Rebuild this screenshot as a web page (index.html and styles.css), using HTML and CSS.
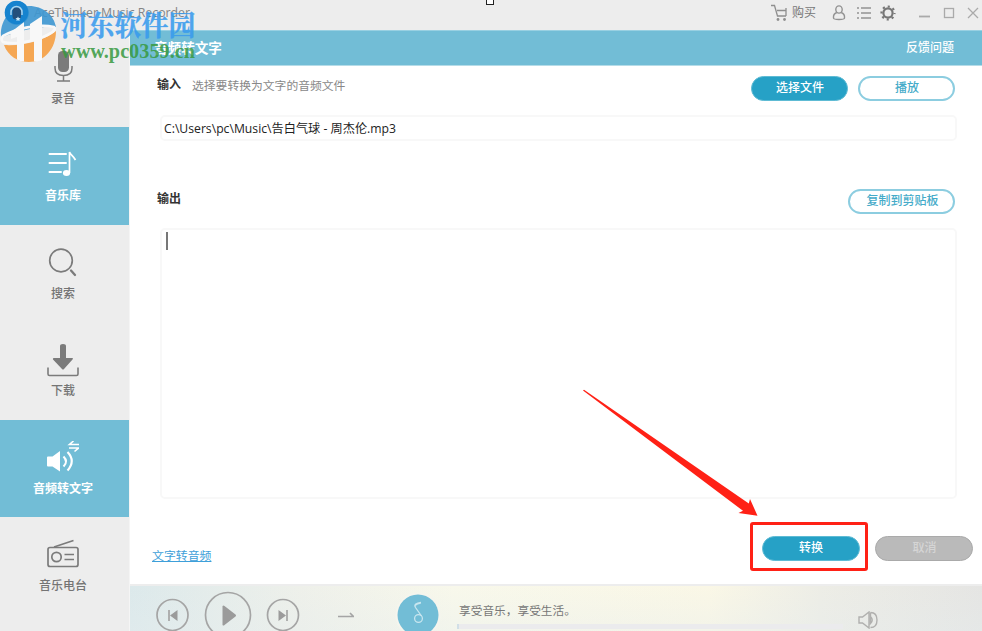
FILE: index.html
```html
<!DOCTYPE html>
<html lang="zh-CN">
<head>
<meta charset="utf-8">
<title>AceThinker Music Recorder</title>
<link rel="stylesheet" href="styles.css">
</head>
<body>
<div class="window">
  <header class="titlebar">
    <svg class="app-logo" width="24" height="24" viewBox="0 0 24 24"><circle cx="12" cy="12" r="12" fill="#1683cf"/></svg>
    <span class="app-name">AceThinker Music Recorder</span>
    <div class="tools">
      <svg class="cart" width="18" height="18" viewBox="0 0 18 18" fill="none" stroke="#8f8f8f" stroke-width="1.300"><path d="M1 1.500h3.500l3 10.500H16M7 6.500h8.500M16 4v8"/><g fill="#8f8f8f" stroke="none"><circle cx="8" cy="15.500" r="1.400"/><circle cx="14.500" cy="15.500" r="1.400"/></g></svg>
      <span class="buy">购买</span>
      <svg class="user" width="14" height="18" viewBox="0 0 14 18" fill="none" stroke="#929292" stroke-width="1.400"><ellipse cx="7" cy="5.500" rx="3.200" ry="3.600"/><path d="M4.800 8.500C2 9.500 1.300 12 1.500 14c.2 2 10.800 2 11 0 .2-2-.5-4.500-3.300-5.500"/></svg>
      <svg class="list" width="14" height="14" viewBox="0 0 14 14" stroke="#929292" stroke-width="1.400"><path d="M0 2h2M4 2h10M0 7h2M4 7h10M0 12h2M4 12h10"/></svg>
      <svg class="gear" width="16" height="16" viewBox="0 0 16 16" fill="none" stroke="#777"><circle cx="8" cy="8" r="4.600" stroke-width="2.200"/><circle cx="8" cy="8" r="6.500" stroke-width="2.200" stroke-dasharray="2.100 3.005" stroke-dashoffset="1.050"/></svg>
      <svg class="winbtns" width="62" height="14" viewBox="0 0 62 14" fill="none" stroke="#aaa" stroke-width="1.300"><path d="M1 10.500h11" stroke-width="1.800"/><rect x="26.500" y="2.500" width="9" height="9"/><path d="M50 2l10 10M60 2L50 12"/></svg>
    </div>
  </header>
  <div class="body">
    <nav class="sidebar">
      <a class="item first">
        <svg width="32" height="32" viewBox="0 0 32 32"><rect x="11" y="0" width="11" height="21" rx="4.500" fill="#7b7b7b"/><path d="M8 15v2c0 5 3 7.500 8.500 7.500S25 22 25 17v-2M16.500 24v5.500M10 30h13" fill="none" stroke="#7b7b7b" stroke-width="1.500"/></svg>
        <span>录音</span></a>
      <a class="item active">
        <svg width="32" height="32" viewBox="0 0 32 32" fill="none" stroke="#fff"><path d="M2.500 6H19M2.500 15H19M2.500 24H14" stroke-width="2" stroke-linecap="round"/><path d="M22.500 25V4c1 3 4 4 6 8" stroke-width="1.700"/><ellipse cx="19.500" cy="25" rx="3.600" ry="3" fill="#fff" stroke="none"/></svg>
        <span>音乐库</span></a>
      <a class="item">
        <svg width="32" height="32" viewBox="0 0 32 32" fill="none" stroke="#7b7b7b"><circle cx="14" cy="14.500" r="11.300" stroke-width="1.700"/><path d="M24 24.500l4 4.500" stroke-width="2.300" stroke-linecap="round"/></svg>
        <span>搜索</span></a>
      <a class="item">
        <svg class="tall" width="32" height="34" viewBox="0 0 32 34"><path d="M13 3q0-2 3-2t3 2v12h6.500q1 .5 0 1.500L17 26q-1 1-2 0L6 16.500q-.5-1 .5-1.500H13z" fill="#7b7b7b"/><path d="M1 24.500v6.500q0 1.500 1.500 1.500h27q1.500 0 1.500-1.500v-6.500" fill="none" stroke="#7b7b7b" stroke-width="1.600"/></svg>
        <span>下载</span></a>
      <a class="item active">
        <svg class="tall" width="32" height="34" viewBox="0 0 32 34"><path d="M0 16.500q0-1 1-1h4.500l7.500-5.500v20.500L5.500 25.500H1q-1 0-1-1z" fill="#fff"/><path d="M16.500 15.500q5 5 0 10M20.500 11q8.500 9 0 18.500" fill="none" stroke="#fff" stroke-width="2.100"/><path d="M32 3.500H22.500l4-3.500M22 7h9.500l-4 3.500" fill="none" stroke="#fff" stroke-width="1.600"/></svg>
        <span>音频转文字</span></a>
      <a class="item radio">
        <svg width="32" height="32" viewBox="0 0 32 32" fill="none" stroke="#7b7b7b" stroke-width="1.700"><rect x="1" y="9.500" width="30" height="19" rx="2"/><circle cx="9.500" cy="19" r="4.700"/><path d="M17.500 16.500H27M17.500 21.500H27M7 9L26.500 2.500"/></svg>
        <span>音乐电台</span></a>
    </nav>
    <main class="content">
      <div class="page-head"><h1>音频转文字</h1><a>反馈问题</a></div>
      <section class="panel">
        <div class="row input-row">
          <b>输入</b><span class="hint">选择要转换为文字的音频文件</span>
          <button class="pill solid">选择文件</button><button class="pill outline">播放</button>
        </div>
        <div class="path">C:\Users\pc\Music\告白气球 - 周杰伦.mp3</div>
        <div class="row output-row"><b>输出</b><button class="pill outline copy">复制到剪贴板</button></div>
        <div class="output"><i class="caret"></i></div>
        <div class="row actions">
          <a class="link">文字转音频</a>
          <div class="mark"><button class="pill solid">转换</button></div>
          <button class="pill disabled">取消</button>
        </div>
      </section>
      <footer class="player">
        <svg class="controls" width="202" height="46" viewBox="0 0 202 46" fill="none" stroke="#a5a5a5" stroke-width="1.700"><circle cx="16.500" cy="29" r="15.500"/><circle cx="72" cy="29" r="22.500"/><circle cx="127" cy="29" r="15.500"/><path d="M13 24v11M131 24v11"/><g fill="#9b9b9b" stroke="none"><path d="M21.500 24v11L14 29.500zM66.500 20q1-1 2 0l11 8.500q1 1 0 2l-11 8.500q-1 1-2 0zM122.500 24v11l7.500-5.500z"/></g><path d="M182 30.500h16M194 27l3.500 3.500"/></svg>
        <svg class="disc" width="46" height="46" viewBox="0 0 46 46"><circle cx="23" cy="29" r="22.500" fill="#f5f5ee"/><circle cx="23" cy="29" r="20.500" fill="#72bdd6"/><g fill="none" stroke="#c8e6ef" stroke-width="1.300"><circle cx="23.500" cy="32.500" r="3.900"/><path d="M26.500 30L20.500 21.500c-2-3 1-4.500 5.500-5M20 19.500q2-2 6-2.500"/></g></svg>
        <div class="track"><span>享受音乐，享受生活。</span><div class="progress"></div></div>
        <svg class="volume" width="20" height="18" viewBox="0 0 20 18" fill="none" stroke="#b0b0ae" stroke-width="1.400"><path d="M1 6h3.500L11 1v16l-6.500-5H1zM12.500 1.500q6.500 0 6.500 7.500t-6.500 7.500M12.500 5.500q3.500 3.500 0 7V1.500"/></svg>
      </footer>
    </main>
  </div>
</div>
<div class="handle"></div>
<svg class="arrow" width="180" height="130" viewBox="580 388 180 130"><path d="M583 390.500L584 389.800 748.800 503.500 750 499 757.500 515.700 738.500 513 743 510.800z" fill="#ff2116"/></svg>
<svg class="watermark" width="200" height="66" viewBox="0 0 200 66">
  <g opacity=".9"><path d="M1 36C0 18 13 6 29 6c14 0 25 9 27 21C39 26 20 30 1 38z" fill="#3d97d2"/><path d="M4 45C24 46 43 41 56 31c0 18-12 31-27 31-11 0-21-6-25-17z" fill="#f6a044"/><path d="M11 32L24 22v39.500q-4 0-7-2V37l-6 2zM30 24l12-8v44q-4 1.500-8 1.500V40l-4 1z" fill="#fafafa"/><path d="M3 36C16 29 38 23 54 27c4 3-6 9-20 13-12 3-24 4-31 2-2-2-2-4 0-6z" fill="none" stroke="#fafafa" stroke-width="2.600"/></g>
  <text class="wm-name" x="60.500" y="35.500" textLength="135" lengthAdjust="spacingAndGlyphs">河东软件园</text>
  <text class="wm-url" x="61" y="58" textLength="134" lengthAdjust="spacingAndGlyphs">www.pc0359.cn</text>
  <g><circle cx="16.500" cy="12.500" r="11.800" fill="#1683cf"/><rect x="12.500" y="7.500" width="8.500" height="12" rx="3.500" fill="#24507c"/><path d="M11 15v-3a5.500 5.500 0 0 1 11 0v3" fill="none" stroke="#a8d4ef" stroke-width="1.500"/><path d="M18 16.500l.8 1.500 1.700.2-1.200 1.200.3 1.700-1.600-.8-1.600.8.3-1.700-1.200-1.200 1.700-.2z" fill="#cce8f7"/></g>
</svg>
</body>
</html>
```
FILE: styles.css
```css
* { box-sizing: border-box; }
body { margin: 0; overflow: hidden; font: 12px/18px "Open Sans", "Noto Sans CJK SC", sans-serif; color: #333; }
svg { display: block; flex: none; }
button { font: inherit; padding: 0; }
.window { width: 982px; height: 631px; display: flex; flex-direction: column; background: #fff; }
.titlebar { height: 30px; flex: none; background: #ededed; display: flex; align-items: center; padding: 0 2px 4px 5px; }
.app-name { margin-left: 5px; font-size: 12.3px; color: #858585; }
.tools { margin-left: auto; display: flex; align-items: center; color: #777; }
.buy { margin: 0 16px 0 4px; }
.user { margin-right: 1px; }
.list { margin: 0 9px 0 10px; }
.winbtns { margin-left: 22px; }
.body { flex: 1; min-height: 0; display: flex; }
.sidebar { width: 130px; flex: none; background: #ededed; border-right: 1px solid #f5f5f5; overflow: hidden; }
.item { height: 97.500px; display: flex; flex-direction: column; align-items: center; padding: 21px 3px 0 0; color: #747474; font-weight: 500; }
.item.first { height: 97px; }
.item span { margin-top: 7px; }
.item svg { height: 32px; }
.item .tall { height: 34px; }
.item .tall + span { margin-top: 5px; }
.active { background: #72bdd6; color: #fff; font-weight: 700; }
.content { flex: 1; min-width: 0; display: flex; flex-direction: column; }
.page-head { height: 36px; background: #72bdd6; border-top: 1px solid #98d0e2; border-bottom: 1px solid #b5dce8; color: #fff; display: flex; align-items: center; justify-content: space-between; padding: 0 29px 0 24px; font-weight: 700; }
.page-head h1 { margin: 0; font-size: 13.600px; font-weight: 700; }
.page-head a { font-weight: 500; margin-right: -1px; }
.panel { height: 518px; padding: 10px 25px 0 22px; }
.row { display: flex; align-items: center; }
.row b { margin-left: 5px; color: #333; }
.input-row { height: 24px; margin-bottom: 15px; }
.hint { margin: -7px auto 0 11px; color: #888; font-size: 11.800px; }
.input-row b { margin-top: -6px; }
.pill { width: 97px; height: 25px; border-radius: 13px; border: 2px solid #8ccde0; background: #fff; color: #45abc9; line-height: 20px; padding: 0 0 1px 1px; font-weight: 500; }
.pill.solid { background: #26a1c6; color: #fff; border: 1px solid #5ebbd4; }
.input-row .outline { margin-left: 10px; margin-right: 2px; }
.path { height: 26px; margin: 0 0 0 8px; border: 2px solid #f8f8f8; border-radius: 5px; padding: 2px; color: #222; font-size: 12.200px; line-height: 19px; }
.output-row { height: 24px; margin: 48px 0 15px; justify-content: space-between; }
.output-row b { margin-top: -5px; }
.pill.copy { width: 107px; margin-right: 2px; padding-left: 2px; }
.output { height: 271px; margin-left: 8px; border: 2px solid #f8f8f8; border-radius: 5px; padding: 2px 4px; }
.caret { display: block; width: 2px; height: 18px; background: #777; }
.actions { margin: 23px -16px 0 0; height: 49px; }
.link { margin-top: 17px; color: #3e9fd9; text-decoration: underline; font-size: 11.900px; }
.mark { width: 118px; height: 49px; margin-left: auto; border: 3px solid #ff2116; border-radius: 3px; display: grid; place-items: center; padding: 3px 0 0 3px; }
.mark .pill { width: 98px; padding-bottom: 0; }
.pill.disabled { margin: 3px 0 0 7px; width: 98px; border: 1px solid #aaa; background: #bababa; color: #d5d5d5; padding-bottom: 0; }
.link, .hint, .path { white-space: nowrap; }
.player { flex: 1; border-top: 2px solid #ededed; display: flex; padding-left: 26px; overflow: hidden; background: linear-gradient(0deg, #e5edef55, #fff0), linear-gradient(90deg, #dce9eb, #eef0ea 20%, #f8f8eb 38%, #faf7e6 68%, #ededE6 81%, #e5e5e3); }
.disc { margin-left: 37px; }
.track { width: 386px; margin-left: 16px; padding-top: 15px; color: #777; }
.track span { margin-left: 2px; display: block; font-size: 11.700px; }
.progress { height: 5px; margin-top: 5px; background: #ebebed; border-left: 2px solid #d1dfe7; }
.volume { margin: 25px 0 0 15px; }
.handle { position: absolute; left: 486px; top: -4px; width: 8px; height: 9px; border: 1px solid #222; background: #fff; }
.arrow { position: absolute; left: 580px; top: 388px; }
.watermark { position: absolute; left: 0; top: 0; }
.wm-name { font: 700 28px "Noto Serif CJK SC", "Noto Sans CJK SC", serif; fill: #389bed; fill-opacity: .88; stroke: #389bed; stroke-opacity: .6; stroke-width: .5; }
.wm-url { font: 700 20px "Liberation Serif", serif; fill: #37993f; fill-opacity: .86; }
```
